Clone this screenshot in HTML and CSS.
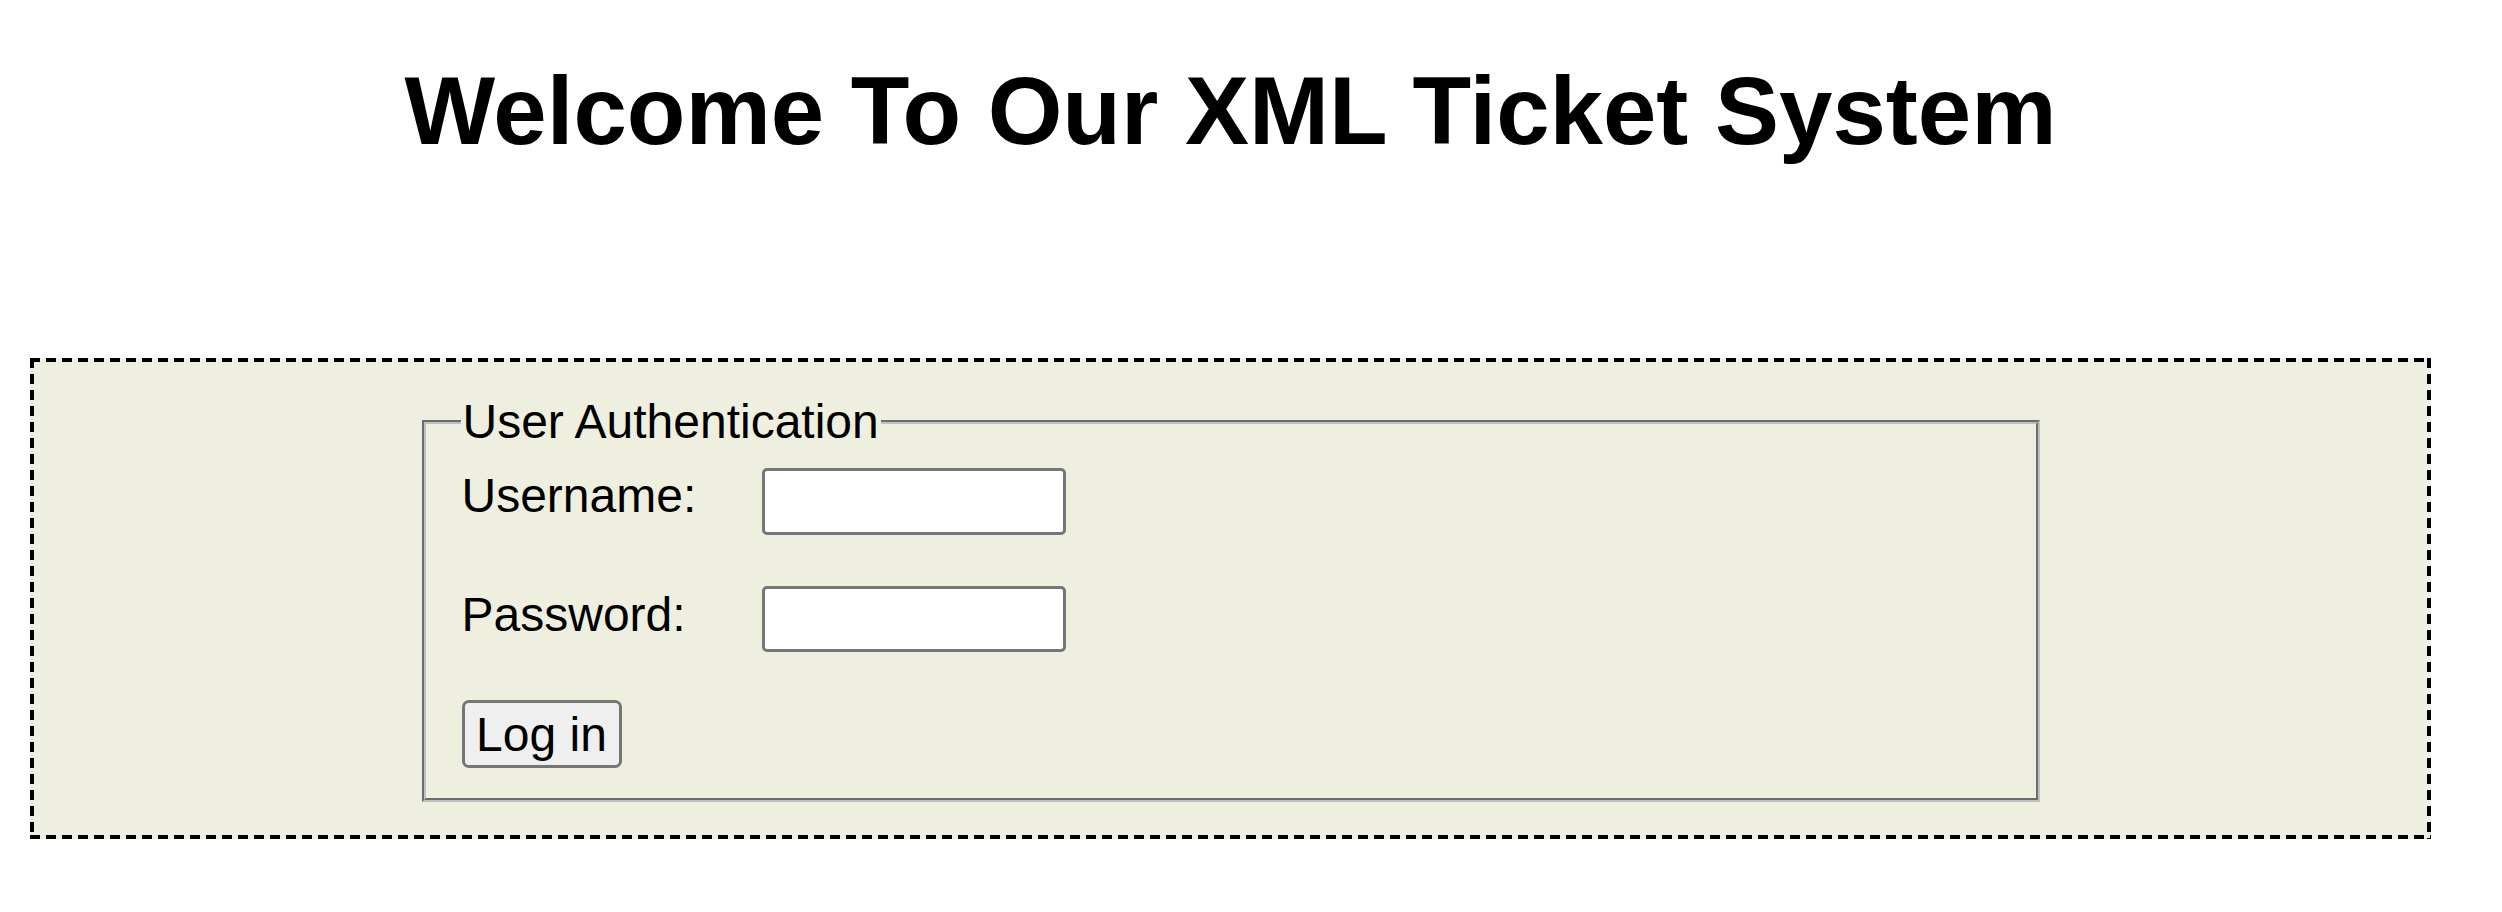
FILE: index.html
```html
<!DOCTYPE html>
<html lang="en">
<head>
<meta charset="utf-8">
<title>XML Ticket System</title>
<link rel="stylesheet" href="styles.css">
</head>
<body>
<div class="page">
  <h1 class="title">Welcome To Our XML Ticket System</h1>
  <div class="login-box">
    <form class="login-form">
      <fieldset class="auth">
        <legend class="auth-legend">User Authentication</legend>
        <div class="field-row">
          <label class="field-label" for="username">Username:</label>
          <input class="field-input" type="text" id="username" name="username">
        </div>
        <div class="field-row field-row-second">
          <label class="field-label" for="password">Password:</label>
          <input class="field-input field-input-second" type="password" id="password" name="password">
        </div>
        <div class="actions">
          <button class="login-button" type="submit">Log in</button>
        </div>
      </fieldset>
    </form>
  </div>
</div>
</body>
</html>
```
FILE: styles.css
```css
html, body {
  margin: 0;
  padding: 0;
  background: #ffffff;
}

body {
  font-family: "Liberation Sans", Arial, Helvetica, sans-serif;
  color: #000000;
}

.page {
  width: 2401px;
  margin-left: 30px;
}

.title {
  margin: 56px 0 0 0;
  font-size: 96px;
  font-weight: 700;
  line-height: 110px;
  text-align: center;
}

.login-box {
  box-sizing: border-box;
  width: 2401px;
  margin-top: 192px;
  padding: 32px 0 33px 0;
  border: 4px solid transparent;
  background:
    repeating-linear-gradient(90deg, #000 0 10px, transparent 10px 16px) left top / 100% 4px no-repeat,
    repeating-linear-gradient(90deg, #000 0 10px, transparent 10px 16px) left bottom / 100% 4px no-repeat,
    repeating-linear-gradient(180deg, #000 0 10px, transparent 10px 16px) left top / 4px 100% no-repeat,
    repeating-linear-gradient(180deg, #000 0 10px, transparent 10px 16px) right top / 4px 100% no-repeat,
    #efefe0;
  background-origin: border-box;
  background-clip: border-box;
}

.login-form {
  margin: 0;
}

.auth {
  box-sizing: border-box;
  width: 1618px;
  margin: 0 auto;
  padding: 17px 36px 30px 36px;
  border: 4px groove #c0c0c0;
  min-inline-size: 0;
}

.auth-legend {
  padding: 0 2px;
  margin-left: -1px;
  font-size: 48px;
  line-height: 55px;
}

.field-row {
  display: flex;
  align-items: flex-start;
}

.field-row-second {
  margin-top: 50px;
}

.field-label {
  width: 300px;
  padding-top: 2px;
  font-size: 48px;
  line-height: 55px;
}

.field-input {
  box-sizing: border-box;
  width: 304px;
  height: 67px;
  margin: 2px 0 0 0;
  padding: 3px 6px;
  border: 3px solid #767676;
  border-radius: 5px;
  background: #ffffff;
  font-family: "Liberation Sans", Arial, sans-serif;
  font-size: 48px;
}

.field-input-second {
  height: 66px;
  margin-top: 1px;
}

.actions {
  margin-top: 48px;
  display: flex;
}

.login-button {
  box-sizing: border-box;
  width: 160px;
  height: 68px;
  padding: 0 10px;
  border: 3px solid #767676;
  border-radius: 7px;
  background: #efefef;
  color: #000000;
  font-family: "Liberation Sans", Arial, sans-serif;
  font-size: 48px;
  line-height: 55px;
}
```
